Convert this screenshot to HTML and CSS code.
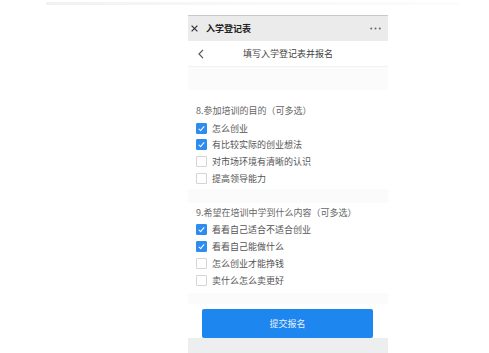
FILE: index.html
```html
<!DOCTYPE html>
<html lang="zh-CN">

<head>
  <meta charset="UTF-8">
  <meta name="viewport" content="width=device-width, initial-scale=1.0">
  <title>入学登记表</title>
  <link rel="stylesheet" href="styles.css">
</head>

<body>

  <div class="top-strip"></div>

  <div class="phone">
    <!-- верхняя панель -->
    <div class="titlebar">
      <svg class="close" width="7" height="7" viewBox="0 0 7 7">
        <path d="M0.6 0.6 L6.4 6.4 M6.4 0.6 L0.6 6.4" stroke="#333" stroke-width="1.2" fill="none"/>
      </svg>
      <span class="titlebar-text">入学登记表</span>
      <svg class="more" width="11" height="3" viewBox="0 0 11 3">
        <circle cx="1.2" cy="1.5" r="1" fill="#666"/>
        <circle cx="5.5" cy="1.5" r="1" fill="#666"/>
        <circle cx="9.8" cy="1.5" r="1" fill="#666"/>
      </svg>
    </div>

    <div class="nav">
      <svg class="back" width="6" height="10" viewBox="0 0 6 10">
        <path d="M5 0.8 L1 5 L5 9.2" stroke="#555" stroke-width="1.2" fill="none"/>
      </svg>
      <span class="nav-title">填写入学登记表并报名</span>
    </div>

    <div class="band band-top"></div>

    <div class="section section-8">
      <div class="question">8.参加培训的目的（可多选）</div>
      <label class="option"><span class="box checked"></span>怎么创业</label>
      <label class="option"><span class="box checked"></span>有比较实际的创业想法</label>
      <label class="option"><span class="box"></span>对市场环境有清晰的认识</label>
      <label class="option"><span class="box"></span>提高领导能力</label>
    </div>

    <div class="band band-mid"></div>

    <div class="section section-9">
      <div class="question">9.希望在培训中学到什么内容（可多选）</div>
      <label class="option"><span class="box checked"></span>看看自己适合不适合创业</label>
      <label class="option"><span class="box checked"></span>看看自己能做什么</label>
      <label class="option"><span class="box"></span>怎么创业才能挣钱</label>
      <label class="option"><span class="box"></span>卖什么怎么卖更好</label>
    </div>

    <div class="band band-bottom"></div>

    <div class="submit-area">
      <button class="submit" type="button">提交报名</button>
    </div>

    <div class="footer"></div>
  </div>

</body>

</html>
```

FILE: styles.css
```css
/* страница регистрации */
body {
  margin: 0;
  padding: 0;
  background-color: #fff;
  font-family: "Noto Sans CJK SC", "Noto Sans", sans-serif;
}

.top-strip {
  height: 3px;
  margin: 2px 29px 0 46px;
  background: linear-gradient(to right, #f1f1f1, #f7f7f7 40%, #fcfcfc);
}

.phone {
  width: 200px;
  margin: 10px 0 0 188px;
}

.titlebar {
  display: flex;
  align-items: center;
  height: 25px;
  padding: 0 7px 0 3px;
  border-top: 1px solid #c9c9c9;
  background-color: #ebebeb;
}

.close {
  flex: none;
}

.titlebar-text {
  margin-left: 8px;
  font-size: 9px;
  font-weight: bold;
  color: #222;
}

.more {
  margin-left: auto;
}

.nav {
  position: relative;
  display: flex;
  align-items: center;
  justify-content: center;
  height: 25px;
  border-bottom: 1px solid #f2f2f2;
  background-color: #fff;
}

.back {
  position: absolute;
  left: 10px;
  top: 8px;
}

.nav-title {
  font-size: 9px;
  color: #444;
}

.band {
  background-color: #fbfbfc;
}

.band-top {
  height: 23px;
}

.band-mid {
  height: 14px;
}

.band-bottom {
  height: 11px;
}

.section {
  padding: 0 8px;
  background-color: #fff;
}

.section-8 {
  padding-top: 13px;
  padding-bottom: 2px;
}

.section-9 {
  padding-top: 2px;
  padding-bottom: 4px;
}

.question {
  height: 16.75px;
  line-height: 16.75px;
  font-size: 9px;
  color: #666;
}

.option {
  display: flex;
  align-items: center;
  gap: 5px;
  height: 16.75px;
  font-size: 9px;
  color: #555;
}

.box {
  position: relative;
  flex: none;
  box-sizing: border-box;
  width: 11px;
  height: 11px;
  border: 1px solid #d4d4d4;
  border-radius: 1px;
  background-color: #fff;
}

.box.checked {
  border-color: #2f8cef;
  background-color: #2f8cef;
}

.box.checked::after {
  content: "";
  position: absolute;
  left: 3px;
  top: 1px;
  width: 2px;
  height: 5px;
  border: solid #fff;
  border-width: 0 1.2px 1.2px 0;
  transform: rotate(40deg);
}

.submit-area {
  padding: 5px 15px 0 14px;
  background-color: #fff;
}

.submit {
  display: block;
  width: 100%;
  height: 29px;
  padding: 0;
  border: none;
  border-radius: 2px;
  background-color: #1e86ef;
  color: #e6f0fd;
  font-family: "Noto Sans CJK SC", "Noto Sans", sans-serif;
  font-size: 9px;
}

.footer {
  height: 16px;
  background-color: #eceef0;
}
```
